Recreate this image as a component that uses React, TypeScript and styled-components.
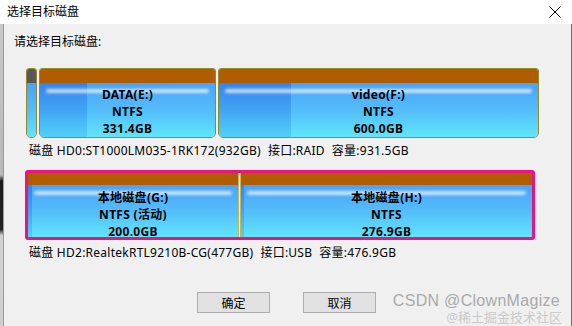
import React from 'react';
import styled, { createGlobalStyle, css } from 'styled-components';

const GlobalStyle = createGlobalStyle`
  html, body {
    margin: 0;
    padding: 0;
    background: #f0f0f0;
  }
  body {
    font-family: "Noto Sans", "Noto Sans CJK SC", sans-serif;
    font-size: 12px;
    color: #000;
  }
`;

const Window = styled.div`
  position: relative;
  width: 572px;
  height: 326px;
  display: flex;
  flex-direction: column;
  overflow: hidden;
`;

const TitleBar = styled.div`
  height: 24px;
  display: flex;
  align-items: center;
  justify-content: space-between;
  background: #fff;
  padding: 0 11px 0 7px;
  flex-shrink: 0;
`;

const Title = styled.span`
  font-size: 12px;
  line-height: 24px;
`;

const Main = styled.div`
  flex: 1;
  display: flex;
`;

const Backdrop = styled.div`
  width: 3px;
  background: linear-gradient(
    to bottom,
    #c9c9c9 0%,
    #b8b8b8 50%,
    #1a1a1a 52%,
    #222 68%,
    #d2d2d2 70%,
    #cfcfcf 100%
  );
`;

const Body = styled.div`
  flex: 1;
  background: #f0f0f0;
  border-left: 1px solid #9a9a9a;
  border-right: 1px solid #6e6e6e;
  display: flex;
  flex-direction: column;
  padding: 9px 0 0 10px;
`;

const Prompt = styled.div`
  line-height: 18px;
  margin-bottom: 17px;
`;

const DiskBlock = styled.div`
  display: flex;
  flex-direction: column;
  padding-left: 12px;
  margin-bottom: 11px;
`;

const DiskBar = styled.div<{ $selected?: boolean }>`
  width: 510px;
  height: 70px;
  display: flex;
  gap: 2px;
  box-sizing: border-box;
  ${(p) =>
    p.$selected &&
    css`
      gap: 0;
      border: 3px solid #e8157e;
      border-radius: 3px;
      margin-left: -1px;
    `}
`;

const Partition = styled.div<{ $width: number; $flat?: boolean }>`
  width: ${(p) => p.$width}px;
  flex-shrink: 0;
  position: relative;
  display: flex;
  flex-direction: column;
  box-sizing: border-box;
  ${(p) =>
    !p.$flat &&
    css`
      overflow: hidden;
      border: 1px solid #948a2a;
      border-radius: 3px 3px 5px 5px;
    `}
`;

const PartitionTop = styled.div<{ $dark?: boolean; $flat?: boolean }>`
  height: ${(p) => (p.$flat ? 12 : 14)}px;
  flex-shrink: 0;
  background: ${(p) => (p.$dark ? '#585858' : '#b05c00')};
`;

const PartitionFill = styled.div<{ $flat?: boolean }>`
  flex: 1;
  min-height: 0;
  position: relative;
  display: flex;
  flex-direction: column;
  align-items: center;
  justify-content: flex-start;
  padding-top: ${(p) => (p.$flat ? 4 : 3)}px;
  background: linear-gradient(to bottom, #4aa2f8 0%, #55c0fa 55%, #60e6fd 100%);
  &::after {
    content: '';
    position: absolute;
    left: 6px;
    right: 6px;
    top: 6px;
    height: 4px;
    border-radius: 3px;
    background: rgba(255, 255, 255, 0.7);
    filter: blur(1.5px);
  }
`;

const UsedShade = styled.div`
  position: absolute;
  left: 0;
  top: 0;
  bottom: 0;
  background: linear-gradient(to bottom, #3583ee 0%, #43a8f4 55%, #50d2f8 100%);
`;

const Label = styled.div`
  position: relative;
  z-index: 1;
  font-weight: 700;
  line-height: 17px;
  height: 17px;
  flex-shrink: 0;
  text-align: center;
  white-space: nowrap;
  letter-spacing: 0.3px;
`;

const Divider = styled.div`
  width: 3px;
  flex-shrink: 0;
  background: linear-gradient(to right, #a49a40, #f4f0a0, #a49a40);
`;

const DiskInfo = styled.div`
  margin-top: 5px;
  line-height: 16px;
  padding-left: 3px;
  display: flex;
  gap: 7px;
  white-space: pre;
  letter-spacing: 0.25px;
`;

const Buttons = styled.div`
  display: flex;
  gap: 33px;
  padding-left: 183px;
  margin-top: 20px;
`;

const Button = styled.button`
  width: 73px;
  height: 21px;
  box-sizing: border-box;
  background: #e1e1e1;
  border: 1px solid #adadad;
  font-family: inherit;
  font-size: 12px;
  padding: 0;
  color: #000;
`;

const Watermark = styled.div`
  position: absolute;
  right: 12px;
  bottom: 16px;
  font-family: "Liberation Sans", sans-serif;
  font-size: 16px;
  line-height: 18px;
  color: #a9a9a9;
  letter-spacing: 0.3px;
`;

const Watermark2 = styled.div`
  position: absolute;
  right: 10px;
  bottom: 1px;
  font-size: 13px;
  line-height: 15px;
  color: #cacaca;
`;

interface Part {
  key: string;
  width: number;
  used: number;
  lines: string[];
  dark?: boolean;
}

const disk0: Part[] = [
  { key: 's', width: 11, used: 0, lines: [], dark: true },
  { key: 'e', width: 177, used: 47, lines: ['DATA(E:)', 'NTFS', '331.4GB'] },
  { key: 'f', width: 321, used: 72, lines: ['video(F:)', 'NTFS', '600.0GB'] },
];

const disk2: Part[] = [
  { key: 'g', width: 210, used: 4, lines: ['本地磁盘(G:)', 'NTFS (活动)', '200.0GB'] },
  { key: 'h', width: 291, used: 3, lines: ['本地磁盘(H:)', 'NTFS', '276.9GB'] },
];

const CloseIcon = () => (
  <svg width="12" height="12" viewBox="0 0 12 12">
    <path d="M0.5 0.5 L11.5 11.5 M11.5 0.5 L0.5 11.5" stroke="#000" strokeWidth="1" />
  </svg>
);

const PartitionView: React.FC<{ part: Part; flat?: boolean }> = ({ part, flat }) => (
  <Partition $width={part.width} $flat={flat}>
    <PartitionTop $dark={part.dark} $flat={flat} />
    <PartitionFill $flat={flat}>
      {part.used > 0 && <UsedShade style={{ width: part.used }} />}
      {part.lines.map((line) => (
        <Label key={line}>{line}</Label>
      ))}
    </PartitionFill>
  </Partition>
);

const App: React.FC = () => (
  <>
    <GlobalStyle />
    <Window>
      <TitleBar>
        <Title>选择目标磁盘</Title>
        <CloseIcon />
      </TitleBar>
      <Main>
        <Backdrop />
        <Body>
          <Prompt>请选择目标磁盘:</Prompt>
          <DiskBlock>
            <DiskBar>
              {disk0.map((p) => (
                <PartitionView key={p.key} part={p} />
              ))}
            </DiskBar>
            <DiskInfo>
              <span>磁盘 HD0:ST1000LM035-1RK172(932GB)</span>
              <span>接口:RAID</span>
              <span>容量:931.5GB</span>
            </DiskInfo>
          </DiskBlock>
          <DiskBlock>
            <DiskBar $selected>
              <PartitionView part={disk2[0]} flat />
              <Divider />
              <PartitionView part={disk2[1]} flat />
            </DiskBar>
            <DiskInfo>
              <span>磁盘 HD2:RealtekRTL9210B-CG(477GB)</span>
              <span>接口:USB</span>
              <span>容量:476.9GB</span>
            </DiskInfo>
          </DiskBlock>
          <Buttons>
            <Button>确定</Button>
            <Button>取消</Button>
          </Buttons>
        </Body>
      </Main>
      <Watermark>CSDN @ClownMagize</Watermark>
      <Watermark2>@稀土掘金技术社区</Watermark2>
    </Window>
  </>
);

export default App;
